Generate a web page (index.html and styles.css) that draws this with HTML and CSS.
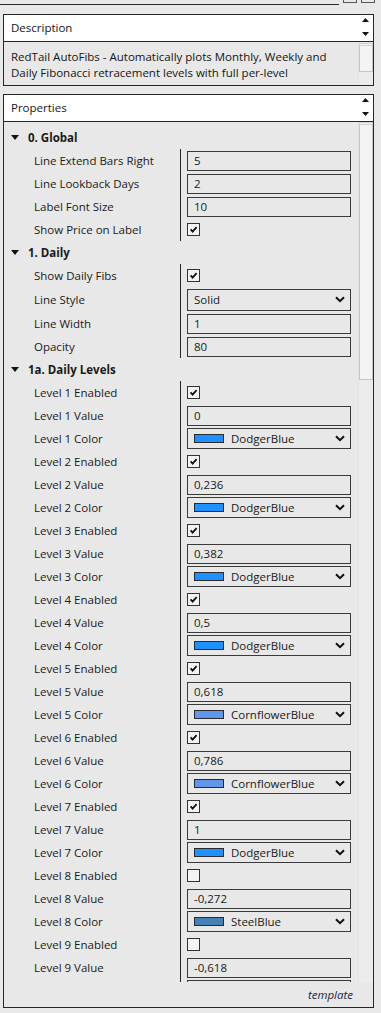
FILE: index.html
```html
<!DOCTYPE html>
<html>
<head>
<meta charset="utf-8">
<link rel="stylesheet" href="styles.css">
</head>
<body>
<div class="topbar">
  <div class="topline"></div>
  <div class="winbtn"></div>
  <div class="winbtn"></div>
</div>

<div class="panel desc">
  <div class="phead">
    <div class="htitle">Description</div>
    <div class="harrows">
      <svg width="15" height="26" viewBox="0 0 15 26"><polygon points="4,7 11,7 7.5,3" fill="#111"/><polygon points="4,17 11,17 7.5,21" fill="#111"/></svg>
    </div>
  </div>
  <div class="dbody">
    <div class="dtext">RedTail AutoFibs - Automatically plots Monthly, Weekly and Daily Fibonacci retracement levels with full per-level customization of colors, line styles and labels.</div>
    <div class="vscroll"><div class="thumb dthumb"></div></div>
  </div>
</div>

<div class="panel props">
  <div class="phead">
    <div class="htitle">Properties</div>
    <div class="harrows">
      <svg width="15" height="26" viewBox="0 0 15 26"><polygon points="4,7 11,7 7.5,3" fill="#111"/><polygon points="4,17 11,17 7.5,21" fill="#111"/></svg>
    </div>
  </div>
  <div class="pbody">
    <div class="pmain">
      <div class="grid">
        <div class="cat"><svg class="tri" width="8" height="5" viewBox="0 0 8 5"><polygon points="0,0 8,0 4,5" fill="#111"/></svg><span>0. Global</span></div>
        <div class="row"><div class="lbl">Line Extend Bars Right</div><div class="val"><div class="inp">5</div></div></div>
        <div class="row"><div class="lbl">Line Lookback Days</div><div class="val"><div class="inp">2</div></div></div>
        <div class="row"><div class="lbl">Label Font Size</div><div class="val"><div class="inp">10</div></div></div>
        <div class="row"><div class="lbl">Show Price on Label</div><div class="val"><div class="chk"><svg width="11" height="11" viewBox="0 0 11 11"><polyline points="2.6,5.4 4.6,7.6 8.6,3.2" fill="none" stroke="#111" stroke-width="1.8"/></svg></div></div></div>

        <div class="cat"><svg class="tri" width="8" height="5" viewBox="0 0 8 5"><polygon points="0,0 8,0 4,5" fill="#111"/></svg><span>1. Daily</span></div>
        <div class="row"><div class="lbl">Show Daily Fibs</div><div class="val"><div class="chk"><svg width="11" height="11" viewBox="0 0 11 11"><polyline points="2.6,5.4 4.6,7.6 8.6,3.2" fill="none" stroke="#111" stroke-width="1.8"/></svg></div></div></div>
        <div class="row tall"><div class="lbl">Line Style</div><div class="val"><div class="dd big"><span class="ddtext">Solid</span><svg class="chev" width="10" height="7" viewBox="0 0 10 7"><polyline points="1,1.2 5,5.2 9,1.2" fill="none" stroke="#111" stroke-width="2"/></svg></div></div></div>
        <div class="row"><div class="lbl">Line Width</div><div class="val"><div class="inp">1</div></div></div>
        <div class="row"><div class="lbl">Opacity</div><div class="val"><div class="inp">80</div></div></div>

        <div class="cat"><svg class="tri" width="8" height="5" viewBox="0 0 8 5"><polygon points="0,0 8,0 4,5" fill="#111"/></svg><span>1a. Daily Levels</span></div>

        <div class="row"><div class="lbl">Level 1 Enabled</div><div class="val"><div class="chk"><svg width="11" height="11" viewBox="0 0 11 11"><polyline points="2.6,5.4 4.6,7.6 8.6,3.2" fill="none" stroke="#111" stroke-width="1.8"/></svg></div></div></div>
        <div class="row"><div class="lbl">Level 1 Value</div><div class="val"><div class="inp">0</div></div></div>
        <div class="row"><div class="lbl">Level 1 Color</div><div class="val"><div class="dd"><span class="sw dodger"></span><span class="ddtext">DodgerBlue</span><svg class="chev" width="10" height="7" viewBox="0 0 10 7"><polyline points="1,1.2 5,5.2 9,1.2" fill="none" stroke="#111" stroke-width="2"/></svg></div></div></div>

        <div class="row"><div class="lbl">Level 2 Enabled</div><div class="val"><div class="chk"><svg width="11" height="11" viewBox="0 0 11 11"><polyline points="2.6,5.4 4.6,7.6 8.6,3.2" fill="none" stroke="#111" stroke-width="1.8"/></svg></div></div></div>
        <div class="row"><div class="lbl">Level 2 Value</div><div class="val"><div class="inp">0,236</div></div></div>
        <div class="row"><div class="lbl">Level 2 Color</div><div class="val"><div class="dd"><span class="sw dodger"></span><span class="ddtext">DodgerBlue</span><svg class="chev" width="10" height="7" viewBox="0 0 10 7"><polyline points="1,1.2 5,5.2 9,1.2" fill="none" stroke="#111" stroke-width="2"/></svg></div></div></div>

        <div class="row"><div class="lbl">Level 3 Enabled</div><div class="val"><div class="chk"><svg width="11" height="11" viewBox="0 0 11 11"><polyline points="2.6,5.4 4.6,7.6 8.6,3.2" fill="none" stroke="#111" stroke-width="1.8"/></svg></div></div></div>
        <div class="row"><div class="lbl">Level 3 Value</div><div class="val"><div class="inp">0,382</div></div></div>
        <div class="row"><div class="lbl">Level 3 Color</div><div class="val"><div class="dd"><span class="sw dodger"></span><span class="ddtext">DodgerBlue</span><svg class="chev" width="10" height="7" viewBox="0 0 10 7"><polyline points="1,1.2 5,5.2 9,1.2" fill="none" stroke="#111" stroke-width="2"/></svg></div></div></div>

        <div class="row"><div class="lbl">Level 4 Enabled</div><div class="val"><div class="chk"><svg width="11" height="11" viewBox="0 0 11 11"><polyline points="2.6,5.4 4.6,7.6 8.6,3.2" fill="none" stroke="#111" stroke-width="1.8"/></svg></div></div></div>
        <div class="row"><div class="lbl">Level 4 Value</div><div class="val"><div class="inp">0,5</div></div></div>
        <div class="row"><div class="lbl">Level 4 Color</div><div class="val"><div class="dd"><span class="sw dodger"></span><span class="ddtext">DodgerBlue</span><svg class="chev" width="10" height="7" viewBox="0 0 10 7"><polyline points="1,1.2 5,5.2 9,1.2" fill="none" stroke="#111" stroke-width="2"/></svg></div></div></div>

        <div class="row"><div class="lbl">Level 5 Enabled</div><div class="val"><div class="chk"><svg width="11" height="11" viewBox="0 0 11 11"><polyline points="2.6,5.4 4.6,7.6 8.6,3.2" fill="none" stroke="#111" stroke-width="1.8"/></svg></div></div></div>
        <div class="row"><div class="lbl">Level 5 Value</div><div class="val"><div class="inp">0,618</div></div></div>
        <div class="row"><div class="lbl">Level 5 Color</div><div class="val"><div class="dd"><span class="sw cornflower"></span><span class="ddtext">CornflowerBlue</span><svg class="chev" width="10" height="7" viewBox="0 0 10 7"><polyline points="1,1.2 5,5.2 9,1.2" fill="none" stroke="#111" stroke-width="2"/></svg></div></div></div>

        <div class="row"><div class="lbl">Level 6 Enabled</div><div class="val"><div class="chk"><svg width="11" height="11" viewBox="0 0 11 11"><polyline points="2.6,5.4 4.6,7.6 8.6,3.2" fill="none" stroke="#111" stroke-width="1.8"/></svg></div></div></div>
        <div class="row"><div class="lbl">Level 6 Value</div><div class="val"><div class="inp">0,786</div></div></div>
        <div class="row"><div class="lbl">Level 6 Color</div><div class="val"><div class="dd"><span class="sw cornflower"></span><span class="ddtext">CornflowerBlue</span><svg class="chev" width="10" height="7" viewBox="0 0 10 7"><polyline points="1,1.2 5,5.2 9,1.2" fill="none" stroke="#111" stroke-width="2"/></svg></div></div></div>

        <div class="row"><div class="lbl">Level 7 Enabled</div><div class="val"><div class="chk"><svg width="11" height="11" viewBox="0 0 11 11"><polyline points="2.6,5.4 4.6,7.6 8.6,3.2" fill="none" stroke="#111" stroke-width="1.8"/></svg></div></div></div>
        <div class="row"><div class="lbl">Level 7 Value</div><div class="val"><div class="inp">1</div></div></div>
        <div class="row"><div class="lbl">Level 7 Color</div><div class="val"><div class="dd"><span class="sw dodger"></span><span class="ddtext">DodgerBlue</span><svg class="chev" width="10" height="7" viewBox="0 0 10 7"><polyline points="1,1.2 5,5.2 9,1.2" fill="none" stroke="#111" stroke-width="2"/></svg></div></div></div>

        <div class="row"><div class="lbl">Level 8 Enabled</div><div class="val"><div class="chk"></div></div></div>
        <div class="row"><div class="lbl">Level 8 Value</div><div class="val"><div class="inp">-0,272</div></div></div>
        <div class="row"><div class="lbl">Level 8 Color</div><div class="val"><div class="dd"><span class="sw steel"></span><span class="ddtext">SteelBlue</span><svg class="chev" width="10" height="7" viewBox="0 0 10 7"><polyline points="1,1.2 5,5.2 9,1.2" fill="none" stroke="#111" stroke-width="2"/></svg></div></div></div>

        <div class="row"><div class="lbl">Level 9 Enabled</div><div class="val"><div class="chk"></div></div></div>
        <div class="row"><div class="lbl">Level 9 Value</div><div class="val"><div class="inp">-0,618</div></div></div>
        <div class="row"><div class="lbl">Level 9 Color</div><div class="val"><div class="dd"><span class="sw steel"></span><span class="ddtext">SteelBlue</span><svg class="chev" width="10" height="7" viewBox="0 0 10 7"><polyline points="1,1.2 5,5.2 9,1.2" fill="none" stroke="#111" stroke-width="2"/></svg></div></div></div>
      </div>
      <div class="vscroll"><div class="thumb pthumb"></div></div>
    </div>
    <div class="pfoot">template</div>
  </div>
</div>
</body>
</html>
```

FILE: styles.css
```css
* { box-sizing: border-box; }
html, body { margin: 0; padding: 0; }
body {
  width: 381px;
  height: 1013px;
  overflow: hidden;
  background: #e9e9e9;
  font-family: "Open Sans", "Noto Sans", sans-serif;
  font-size: 11.5px;
  color: #1a1a1a;
}
.topbar { display: flex; align-items: flex-start; height: 14px; }
.topline { flex: 0 0 339px; height: 5px; border-bottom: 1px solid #2b2b2b; }
.winbtn { width: 14px; height: 3px; margin-left: 4px; border: 1px solid #555; border-top: none; }

.panel {
  margin-left: 3px;
  width: 371px;
  border: 1px solid #262626;
  background: #e8e8e8;
  display: flex;
  flex-direction: column;
}
.desc { height: 72px; }
.props { height: 914px; margin-top: 8px; }

.phead {
  display: flex;
  height: 27px;
  flex: 0 0 27px;
  background: #ffffff;
  border-bottom: 1px solid #262626;
}
.htitle { flex: 1; padding-left: 7px; line-height: 26px; font-size: 11.5px; color: #14142a; }
.harrows { width: 15px; height: 26px; }
.harrows svg { display: block; }

.dbody { display: flex; height: 43px; }
.dtext {
  flex: 1;
  padding: 7px 14px 0 7px;
  line-height: 16px;
  overflow: hidden;
  color: #151515;
}
.vscroll {
  width: 15px;
  flex: 0 0 15px;
  background: #ececec;
  border-left: 1px solid #e2e2e2;
}
.thumb {
  width: 14px;
  background: #f4f4f4;
  border: 1px solid #c6c6c6;
  border-top: 3px double #d0d0d0;
}
.dthumb { height: 29px; margin-top: 1px; }
.pthumb { height: 258px; }

.pbody { flex: 1; display: flex; flex-direction: column; }
.pmain { display: flex; height: 860px; flex: 0 0 860px; }
.grid { flex: 1; overflow: hidden; padding-top: 4px; }
.pfoot {
  flex: 1;
  text-align: right;
  padding-right: 20px;
  line-height: 25px;
  font-style: italic;
  font-size: 11.5px;
  color: #1c2342;
}

.cat {
  display: flex;
  align-items: center;
  height: 23px;
  padding-left: 7px;
  font-weight: 700;
  font-size: 11.5px;
}
.tri { margin-right: 9px; display: block; }

.row { display: flex; height: 23px; }
.row.tall { height: 25px; }
.lbl { width: 176px; flex: 0 0 176px; padding-left: 30px; line-height: 23px; white-space: nowrap; }
.row.tall .lbl { line-height: 25px; }
.val {
  flex: 1;
  display: flex;
  align-items: center;
  padding-left: 6px;
  border-left: 1px solid #262626;
}
.inp {
  width: 164px;
  height: 20px;
  border: 1px solid #3a3a3a;
  padding-left: 6px;
  line-height: 18px;
}
.dd {
  width: 164px;
  height: 21px;
  border: 1px solid #3a3a3a;
  display: flex;
  align-items: center;
  padding: 0 5px 0 6px;
}
.dd.big { height: 22px; }
.ddtext { flex: 1; }
.chev { display: block; }
.sw {
  width: 30px;
  height: 9px;
  border: 1px solid #2a2a2a;
  margin-right: 7px;
}
.dodger { background: #1e90ff; }
.cornflower { background: #6495ed; }
.steel { background: #4682b4; }
.chk {
  width: 13px;
  height: 13px;
  border: 1px solid #333;
  background: #f3f3f3;
}
.chk svg { display: block; }
```
